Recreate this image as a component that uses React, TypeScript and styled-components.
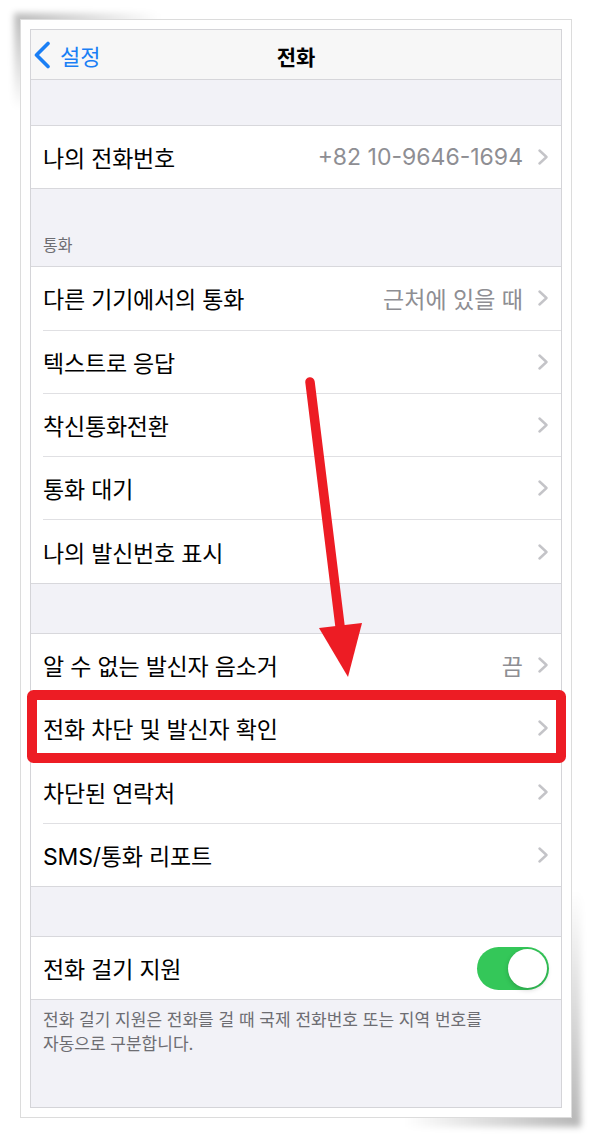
import React from "react"
import styled, { createGlobalStyle } from "styled-components"

const GlobalStyle = createGlobalStyle`
	html {
		background: #ffffff;
	}
	body {
		margin: 0;
		padding: 0;
		font-family: Inter, "Noto Sans CJK KR", sans-serif;
		-webkit-font-smoothing: antialiased;
	}
`

type Row = { label: string; value?: string; chevron?: boolean; toggle?: boolean }

const callRows: Row[] = [
	{ label: "다른 기기에서의 통화", value: "근처에 있을 때", chevron: true },
	{ label: "텍스트로 응답", chevron: true },
	{ label: "착신통화전환", chevron: true },
	{ label: "통화 대기", chevron: true },
	{ label: "나의 발신번호 표시", chevron: true },
]

const blockRows: Row[] = [
	{ label: "알 수 없는 발신자 음소거", value: "끔", chevron: true },
	{ label: "전화 차단 및 발신자 확인", chevron: true },
	{ label: "차단된 연락처", chevron: true },
	{ label: "SMS/통화 리포트", chevron: true },
]

const Chevron = () => (
	<ChevronIcon viewBox="0 0 10 16" width="10" height="16">
		<polyline points="1.5,1.5 8.5,8 1.5,14.5" fill="none" stroke="#c4c4c8" strokeWidth="2.4" strokeLinecap="round" strokeLinejoin="round" />
	</ChevronIcon>
)

const SettingsRow: React.FC<{ row: Row }> = ({ row }) => (
	<RowItem>
		<RowLabel>{row.label}</RowLabel>
		<RowRight>
			{row.value && <RowValue>{row.value}</RowValue>}
			{row.chevron && <Chevron />}
			{row.toggle && (
				<Toggle>
					<Knob />
				</Toggle>
			)}
		</RowRight>
	</RowItem>
)

const Group: React.FC<{ rows: Row[] }> = ({ rows }) => (
	<GroupList>
		{rows.map((r, i) => (
			<SettingsRow key={`${r.label}-${i}`} row={r} />
		))}
	</GroupList>
)

export default function App() {
	return (
		<>
			<GlobalStyle />
			<Page>
				<Card>
					<Screen>
						<NavBar>
							<BackButton>
								<svg viewBox="0 0 18 28" width="18" height="28">
									<polyline points="15,2.5 3.5,14 15,25.5" fill="none" stroke="#1a7ff5" strokeWidth="3.6" strokeLinecap="round" strokeLinejoin="round" />
								</svg>
								<span>설정</span>
							</BackButton>
							<NavTitle>전화</NavTitle>
						</NavBar>
						<Spacer $h={45} />
						<Group rows={[{ label: "나의 전화번호", value: "+82 10-9646-1694", chevron: true }]} />
						<SectionHeader>통화</SectionHeader>
						<Group rows={callRows} />
						<Spacer $h={49} />
						<Group rows={blockRows} />
						<Spacer $h={49} />
						<Group rows={[{ label: "전화 걸기 지원", toggle: true }]} />
						<Footer>
							전화 걸기 지원은 전화를 걸 때 국제 전화번호 또는 지역 번호를
							<br />
							자동으로 구분합니다.
						</Footer>
					</Screen>
					<Annotation viewBox="0 0 550 1097" width="550" height="1097">
						<rect x="11" y="675" width="529" height="63" rx="1.5" fill="none" stroke="#ed1c24" strokeWidth="10" />
						<line x1="289" y1="362" x2="319" y2="606" stroke="#ed1c24" strokeWidth="9.5" strokeLinecap="round" />
						<polygon points="298,608 341,603 327,657" fill="#ed1c24" />
					</Annotation>
				</Card>
			</Page>
		</>
	)
}

const Page = styled.div`
	padding: 19px 20px 20px 20px;
	width: 552px;
`
const Card = styled.div`
	position: relative;
	box-sizing: border-box;
	width: 552px;
	height: 1099px;
	padding: 9px;
	background: #ffffff;
	border: 1px solid #dcdcdc;

	/* curled paper shadow, top-left and bottom-right only */
	&::before {
		content: "";
		position: absolute;
		z-index: -1;
		top: -7px;
		left: -7px;
		width: 150px;
		height: 110px;
		background: radial-gradient(ellipse 140px 90px at 6px 6px, rgba(0, 0, 0, 0.26), rgba(0, 0, 0, 0) 100%);
		filter: blur(3px);
	}
	&::after {
		content: "";
		position: absolute;
		z-index: -1;
		right: -10px;
		bottom: -10px;
		width: 180px;
		height: 240px;
		background: radial-gradient(ellipse 170px 230px at calc(100% - 6px) calc(100% - 6px), rgba(0, 0, 0, 0.28), rgba(0, 0, 0, 0) 100%);
		filter: blur(3px);
	}
`
const Screen = styled.div`
	box-sizing: border-box;
	height: 1079px;
	border: 1px solid #d4d4d8;
	background: #f2f2f7;
	display: flex;
	flex-direction: column;
	overflow: hidden;
`
const NavBar = styled.div`
	position: relative;
	height: 49px;
	flex-shrink: 0;
	display: flex;
	align-items: center;
	justify-content: center;
	background: #f7f7f7;
	border-bottom: 1px solid #d6d6da;
`
const BackButton = styled.div`
	position: absolute;
	left: 2px;
	top: 0;
	bottom: 0;
	display: flex;
	align-items: center;
	gap: 9px;
	color: #1a7ff5;
	font-size: 22px;
	padding-top: 1px;
`
const NavTitle = styled.div`
	font-size: 21px;
	font-weight: 700;
	color: #000000;
	padding-top: 3px;
`
const Spacer = styled.div<{ $h: number }>`
	height: ${(p) => p.$h}px;
	flex-shrink: 0;
`
const GroupList = styled.div`
	background: #ffffff;
	border-top: 1px solid #d8d8dc;
	border-bottom: 1px solid #d8d8dc;
	flex-shrink: 0;
`
const RowItem = styled.div`
	position: relative;
	height: 62.3px;
	display: flex;
	align-items: center;
	justify-content: space-between;
	padding: 0 13px 0 12px;

	& + & {
		border-top: 1px solid transparent;
	}
	& + &::before {
		content: "";
		position: absolute;
		top: -1px;
		left: 12px;
		right: 0;
		height: 1px;
		background: #e0e0e3;
	}
`
const RowLabel = styled.div`
	font-size: 23px;
	color: #000000;
	letter-spacing: -0.2px;
`
const RowRight = styled.div`
	display: flex;
	align-items: center;
	gap: 15px;
`
const RowValue = styled.div`
	font-size: 23px;
	color: #8e8e93;
`
const ChevronIcon = styled.svg`
	display: block;
`
const Toggle = styled.div`
	position: relative;
	box-sizing: border-box;
	width: 72px;
	height: 43px;
	border-radius: 22px;
	background: #34c759;
	margin-right: -1px;
`
const Knob = styled.div`
	position: absolute;
	top: 2px;
	right: 2px;
	width: 39px;
	height: 39px;
	border-radius: 50%;
	background: #ffffff;
	box-shadow: 0 2px 5px rgba(0, 0, 0, 0.18), 0 0 1px rgba(0, 0, 0, 0.1);
`
const SectionHeader = styled.div`
	height: 77px;
	flex-shrink: 0;
	box-sizing: border-box;
	display: flex;
	align-items: flex-end;
	padding: 0 0 11px 12px;
	font-size: 16px;
	line-height: 20px;
	color: #6d6d72;
`
const Footer = styled.div`
	padding: 8px 12px 0 12px;
	font-size: 17px;
	line-height: 24px;
	color: #6d6d72;
`
const Annotation = styled.svg`
	position: absolute;
	left: 0;
	top: 0;
	pointer-events: none;
`
